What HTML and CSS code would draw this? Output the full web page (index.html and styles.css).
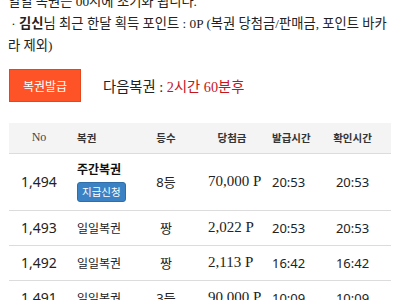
FILE: index.html
```html
<!DOCTYPE html>
<html lang="ko">
<head>
<meta charset="utf-8">
<link rel="stylesheet" href="styles.css">
</head>
<body>
<div class="page">
  <p class="notice notice-top">일일 복권은 00시에 초기화 됩니다.</p>
  <p class="notice">&nbsp;· <b>김신</b>님 최근 한달 획득 포인트 : 0P (복권 당첨금/판매금, 포인트 바카라 제외)</p>

  <div class="actions">
    <button class="btn-issue">복권발급</button>
    <span class="next">다음복권 : <span class="next-time">2시간 60분후</span></span>
  </div>

  <table class="list">
    <colgroup>
      <col class="c-no"><col class="c-name"><col class="c-rank"><col class="c-prize"><col class="c-issue"><col class="c-check">
    </colgroup>
    <thead>
      <tr>
        <th class="h-no">No</th>
        <th class="h-name">복권</th>
        <th class="h-rank">등수</th>
        <th class="h-prize">당첨금</th>
        <th class="h-issue">발급시간</th>
        <th class="h-check">확인시간</th>
      </tr>
    </thead>
    <tbody>
      <tr class="row-tall">
        <td class="no">1,494</td>
        <td class="name"><div class="name-bold">주간복권</div><button class="btn-claim">지급신청</button></td>
        <td class="rank">8등</td>
        <td class="prize">70,000 P</td>
        <td class="issue">20:53</td>
        <td class="check">20:53</td>
      </tr>
      <tr>
        <td class="no">1,493</td>
        <td class="name">일일복권</td>
        <td class="rank">짱</td>
        <td class="prize">2,022 P</td>
        <td class="issue">20:53</td>
        <td class="check">20:53</td>
      </tr>
      <tr>
        <td class="no">1,492</td>
        <td class="name">일일복권</td>
        <td class="rank">짱</td>
        <td class="prize">2,113 P</td>
        <td class="issue">16:42</td>
        <td class="check">16:42</td>
      </tr>
      <tr>
        <td class="no">1,491</td>
        <td class="name">일일복권</td>
        <td class="rank">3등</td>
        <td class="prize">90,000 P</td>
        <td class="issue">10:09</td>
        <td class="check">10:09</td>
      </tr>
    </tbody>
  </table>
</div>
</body>
</html>
```
FILE: styles.css
```css
html, body {
  margin: 0;
  padding: 0;
  background: #fff;
  overflow: hidden;
}
body {
  font-family: "Liberation Serif", "Noto Sans CJK KR", serif;
  color: #222;
  font-size: 13px;
}
.page {
  padding: 0 8px;
}
.notice {
  margin: 0;
  line-height: 22px;
  font-size: 13.3px;
}
.notice-top {
  margin-top: -9px;
}
.notice b {
  font-weight: bold;
}
.actions {
  display: flex;
  align-items: center;
  gap: 22px;
  margin-top: 12px;
  margin-left: 1px;
}
.btn-issue {
  width: 72px;
  height: 33px;
  background: #fd5326;
  border: 1px solid #e6461c;
  color: #fff;
  font-family: "Noto Sans CJK KR", sans-serif;
  font-size: 12px;
  padding: 0;
  border-radius: 0;
}
.next {
  font-size: 14.3px;
  color: #222;
}
.next-time {
  color: #c4161c;
}
.list {
  margin-top: 21px;
  margin-left: 1px;
  width: 382px;
  border-collapse: collapse;
  table-layout: fixed;
}
.c-no { width: 60px; }
.c-name { width: 67px; }
.c-rank { width: 60px; }
.c-prize { width: 72px; }
.c-issue { width: 60px; }
.c-check { width: 63px; }
.list thead tr {
  background: #f4f4f4;
  height: 30px;
  border-bottom: 1px solid #dcdcdc;
}
.list th {
  font-family: "Liberation Serif", "Noto Sans CJK KR", serif;
  font-size: 10.5px;
  font-weight: bold;
  color: #333;
  padding: 0;
  text-align: center;
}
.list th.h-no {
  font-weight: normal;
  font-size: 12px;
  color: #444;
}
.list th.h-name {
  text-align: left;
  padding-left: 8px;
}
.list th.h-issue {
  text-align: left;
  padding-left: 4px;
}
.list th.h-check {
  padding-right: 14px;
}
.list tbody tr {
  height: 35px;
  border-bottom: 1px solid #dcdcdc;
}
.list tbody tr.row-tall {
  height: 57px;
}
.list td {
  padding: 0;
  font-family: "Noto Sans", "Noto Sans CJK KR", sans-serif;
  font-size: 14px;
  color: #222;
  text-align: center;
  vertical-align: middle;
}
.list td.name {
  text-align: left;
  padding-left: 8px;
  font-size: 12px;
}
.list td.rank {
  font-size: 13px;
}
.list td.prize {
  font-family: "Liberation Serif", "Noto Sans CJK KR", serif;
  font-size: 15px;
  text-align: left;
  padding-left: 12px;
}
.list td.issue {
  text-align: left;
  padding-left: 4px;
  font-size: 13px;
}
.list td.check {
  padding-right: 14px;
  font-size: 13px;
}
.name-bold {
  font-weight: bold;
  font-size: 12px;
  line-height: 16px;
  color: #111;
}
.btn-claim {
  display: block;
  margin-top: 4px;
  height: 20px;
  padding: 0 4px;
  background: #3b82c4;
  border: 1px solid #2f6ea8;
  border-radius: 3px;
  color: #fff;
  font-family: "Noto Sans CJK KR", sans-serif;
  font-size: 10.5px;
  line-height: 18px;
}
```
